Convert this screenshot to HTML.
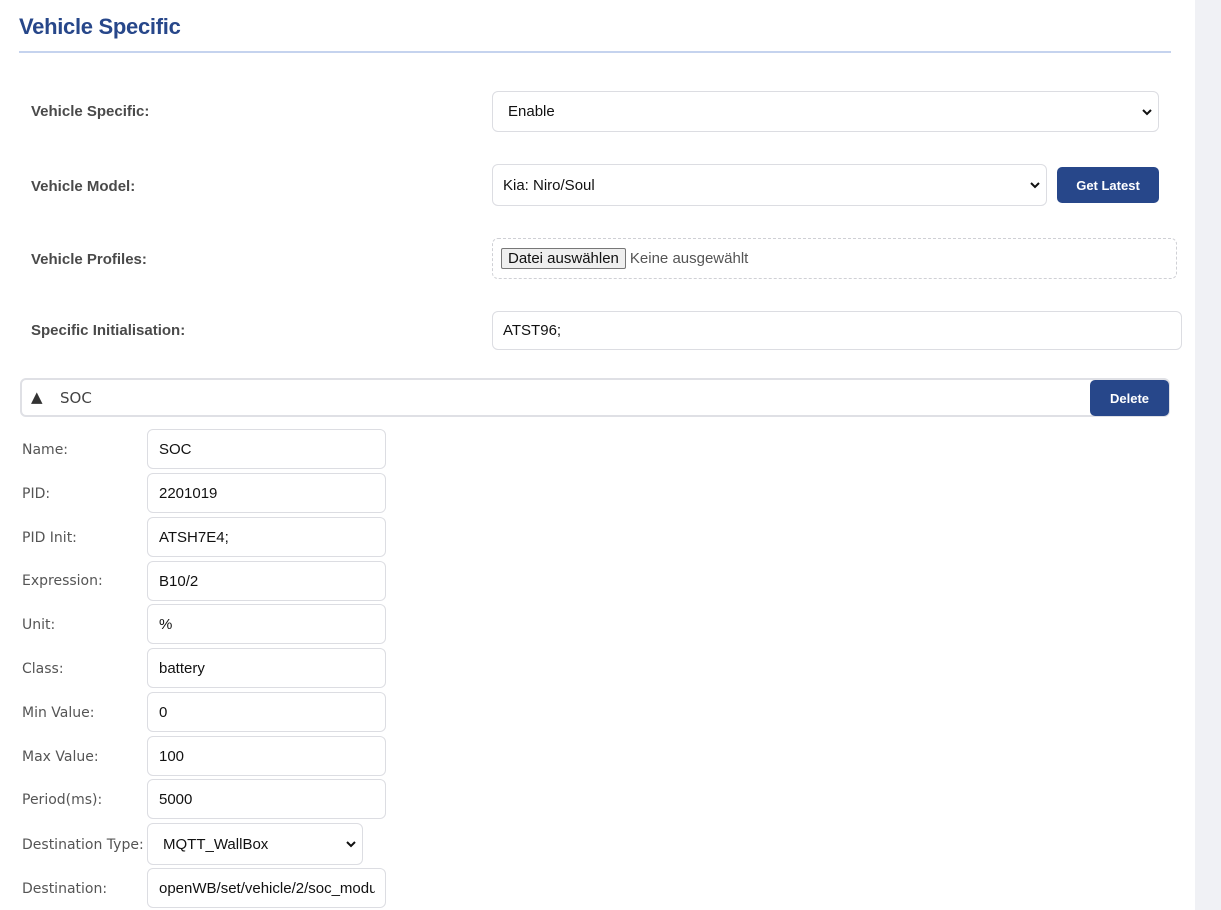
<!DOCTYPE html>
<html><head><meta charset="utf-8"><style>
*{box-sizing:border-box;margin:0;padding:0}
body{width:1221px;height:910px;background:#fff;position:relative;overflow:hidden;font-family:"DejaVu Sans","Liberation Sans",sans-serif}
.side{position:absolute;left:1195px;top:0;width:26px;height:910px;background:#f0f1f5}
h1{position:absolute;left:19px;top:14px;font-family:"Liberation Sans",sans-serif;font-size:22px;font-weight:bold;color:#27478a;letter-spacing:-0.3px}
.hr{position:absolute;left:19px;top:51px;width:1152px;height:2px;background:#c5d3ee}
.lb{position:absolute;font-family:"Liberation Sans",sans-serif;font-size:15px;color:#4a4a4a;font-weight:bold}
.l2{position:absolute;left:22px;font-size:14px;color:#555}
.box{position:absolute;border:1px solid #dcdde2;border-radius:6px;background:#fff;font-family:"Liberation Sans",sans-serif;font-size:15px;color:#111;padding-left:11px;display:flex;align-items:center;white-space:nowrap;overflow:hidden}
.btn{position:absolute;background:#27478a;color:#fff;border-radius:5px;font-family:"Liberation Sans",sans-serif;font-size:13px;font-weight:bold;display:flex;align-items:center;justify-content:center}
.chev{position:absolute;right:6px;top:50%;margin-top:-4px}
</style></head><body>
<div class="side"></div>
<h1>Vehicle Specific</h1>
<div class="hr"></div>

<div class="lb" style="left:31px;top:103px">Vehicle Specific:</div>
<div class="box" style="left:492px;top:91px;width:667px;height:41px;padding-left:15px">Enable<svg class="chev" width="10" height="8" viewBox="0 0 10 8"><path d="M1 2l4 4 4-4" stroke="#111" stroke-width="2" fill="none"/></svg></div>

<div class="lb" style="left:31px;top:178px">Vehicle Model:</div>
<div class="box" style="left:492px;top:164px;width:555px;height:42px;padding-left:10px">Kia: Niro/Soul<svg class="chev" width="10" height="8" viewBox="0 0 10 8"><path d="M1 2l4 4 4-4" stroke="#111" stroke-width="2" fill="none"/></svg></div>
<div class="btn" style="left:1057px;top:167px;width:102px;height:36px">Get Latest</div>

<div class="lb" style="left:31px;top:251px">Vehicle Profiles:</div>
<div class="box" style="left:492px;top:238px;width:685px;height:41px;border:1px dashed #cfd0d5;padding-left:8px;color:#555">
<span style="border:1px solid #777;background:#efefef;color:#111;border-radius:2px;padding:1px 6px;margin-right:4px;font-size:15px">Datei auswählen</span>Keine ausgewählt</div>

<div class="lb" style="left:31px;top:322px">Specific Initialisation:</div>
<div class="box" style="left:492px;top:311px;width:690px;height:39px;padding-left:10px">ATST96;</div>

<div style="position:absolute;left:20px;top:378px;width:1150px;height:39px;border:2px solid #dfe0e5;border-radius:6px;background:#fff"></div>
<div style="position:absolute;left:31px;top:388px;font-size:15px;color:#333">▲</div>
<div style="position:absolute;left:60px;top:389px;font-size:15px;color:#444">SOC</div>
<div class="btn" style="left:1090px;top:380px;width:79px;height:36px">Delete</div>

<div class="l2" style="top:442px">Name:</div><div class="box" style="left:147px;top:429px;width:239px;height:40px">SOC</div>
<div class="l2" style="top:486px">PID:</div><div class="box" style="left:147px;top:473px;width:239px;height:40px">2201019</div>
<div class="l2" style="top:530px">PID Init:</div><div class="box" style="left:147px;top:517px;width:239px;height:40px">ATSH7E4;</div>
<div class="l2" style="top:573px">Expression:</div><div class="box" style="left:147px;top:561px;width:239px;height:40px">B10/2</div>
<div class="l2" style="top:617px">Unit:</div><div class="box" style="left:147px;top:604px;width:239px;height:40px">%</div>
<div class="l2" style="top:661px">Class:</div><div class="box" style="left:147px;top:648px;width:239px;height:40px">battery</div>
<div class="l2" style="top:705px">Min Value:</div><div class="box" style="left:147px;top:692px;width:239px;height:40px">0</div>
<div class="l2" style="top:749px">Max Value:</div><div class="box" style="left:147px;top:736px;width:239px;height:40px">100</div>
<div class="l2" style="top:792px">Period(ms):</div><div class="box" style="left:147px;top:779px;width:239px;height:40px">5000</div>
<div class="l2" style="top:837px">Destination Type:</div><div class="box" style="left:147px;top:823px;width:216px;height:42px;padding-left:15px">MQTT_WallBox<svg class="chev" width="10" height="8" viewBox="0 0 10 8"><path d="M1 2l4 4 4-4" stroke="#111" stroke-width="2" fill="none"/></svg></div>
<div class="l2" style="top:881px">Destination:</div><div class="box" style="left:147px;top:868px;width:239px;height:40px"><span style="display:block;width:216px;overflow:hidden">openWB/set/vehicle/2/soc_module</span></div>
</body></html>
